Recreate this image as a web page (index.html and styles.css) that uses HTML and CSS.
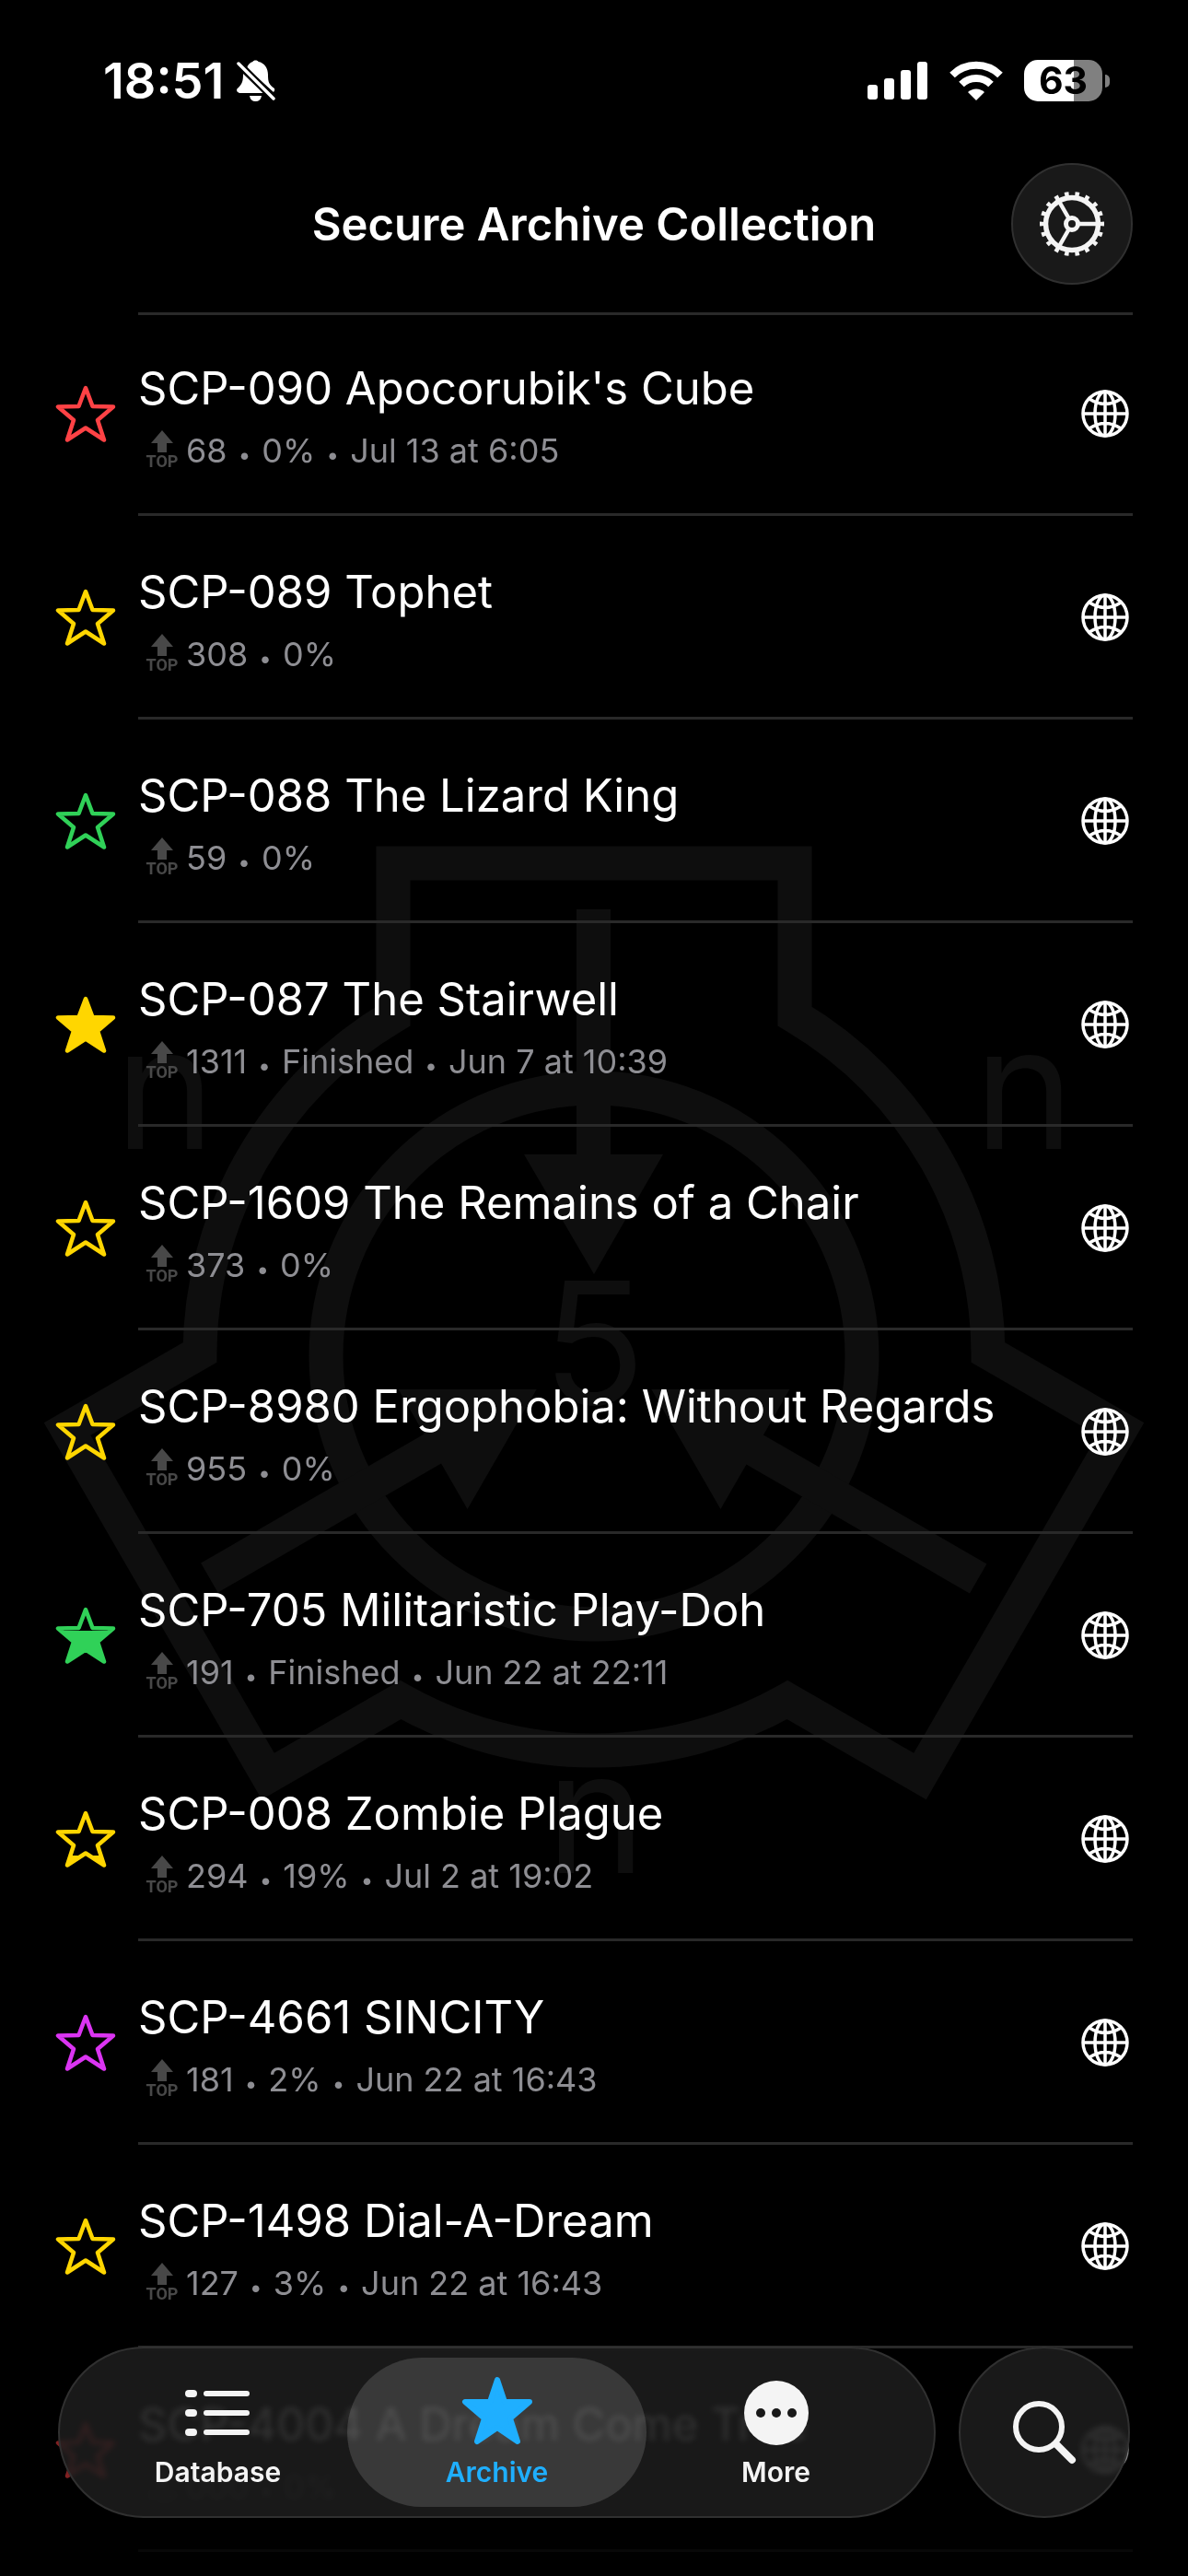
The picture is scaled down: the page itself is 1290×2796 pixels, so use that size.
FILE: index.html
```html
<!DOCTYPE html>
<html lang="en">
<head>
<meta charset="utf-8">
<meta name="viewport" content="width=device-width, initial-scale=1">
<title>Secure Archive Collection</title>
<link rel="stylesheet" href="styles.css">
</head>
<body>
<svg class="defs" width="0" height="0" aria-hidden="true">
  <symbol id="star" viewBox="0 0 66 62">
    <path d="M33 3 L40.5 23 L63 23.5 L46 38 L53 59.5 L33 46.5 L13 59.5 L20 38 L3 23.5 L25.5 23 Z" fill="none" stroke="currentColor" stroke-width="4.5" stroke-linejoin="round"/>
  </symbol>
  <clipPath id="star-shape">
    <path d="M33 3 L40.5 23 L63 23.5 L46 38 L53 59.5 L33 46.5 L13 59.5 L20 38 L3 23.5 L25.5 23 Z"/>
  </clipPath>
  <symbol id="globe" viewBox="-26 -26 52 52">
    <g fill="none" stroke="currentColor" stroke-width="3.5">
      <circle r="24"/>
      <ellipse rx="11" ry="24"/>
      <path d="M0 -24V24M-24 0H24M-17 -16Q0 -5 17 -16M-17 16Q0 5 17 16"/>
    </g>
  </symbol>
  <symbol id="arrow" viewBox="0 0 24 24">
    <path d="M12 0 L24 14 H17 V24 H7 V14 H0 Z" fill="currentColor"/>
  </symbol>
</svg>

<div class="backdrop" aria-hidden="true">
  <svg viewBox="-645 -645 1290 1290">
    <g fill="none" stroke="currentColor" stroke-width="37">
      <path d="M-218 -369 V-535 H218 V-369 A428 428 0 0 1 428 -4 L572 79 L354 456 L210 373 A428 428 0 0 1 -210 373 L-354 456 L-572 79 L-428 -4 A428 428 0 0 1 -218 -369 Z"/>
      <circle r="291"/>
    </g>
    <g fill="currentColor">
      <path d="M-19 -485H18V-219H75L0 -89L-76 -219H-19Z"/>
      <path transform="rotate(120)" d="M-18 -482H19V-202H75L0 -72L-75 -202H-18Z"/>
      <path transform="rotate(240)" d="M-18 -482H19V-202H75L0 -72L-75 -202H-18Z"/>
      <g class="marks" text-anchor="middle">
        <text x="0" y="52">5</text>
        <text x="-466" y="-225">n</text>
        <text x="467" y="-225">n</text>
        <text x="2" y="561">n</text>
      </g>
    </g>
  </svg>
</div>

<header>
  <div class="status">
    <div class="clock">
      <time>18:51</time>
      <svg width="42" height="46" viewBox="0 0 42 46" role="img" aria-label="Silent">
        <path fill="currentColor" d="M11 9 C12 5 15 2.500 17.500 2 C18 0 23 0 23.500 2 C30 3 34 9 34 16 C34 24 35 27 41 31 Q42 33 40 35 Z M7 15 L29 36 H3 Q0 35 0 33 Q0 31 2 30 C6 26 7 23 7 15 Z M14 39 H27 Q26 45 20.500 45 Q15 45 14 39 Z"/>
        <path stroke="#000" stroke-width="8" d="M4 6 L40 42"/>
        <path stroke="currentColor" stroke-width="3.500" stroke-linecap="round" d="M2 4 L40 42"/>
      </svg>
    </div>
    <div class="signals">
      <svg width="66" height="42" viewBox="0 0 66 42" fill="currentColor" role="img" aria-label="Signal">
        <rect y="25" width="11" height="16" rx="3"/><rect x="18" y="18" width="11" height="23" rx="3"/><rect x="36" y="9" width="11" height="32" rx="3"/><rect x="54" width="11" height="41" rx="3"/>
      </svg>
      <svg width="58" height="43" viewBox="0 0 58 43" role="img" aria-label="Wi-Fi">
        <g fill="none" stroke="currentColor" stroke-width="8">
          <path d="M3 15.500 A37 37 0 0 1 55 15.500"/>
          <path d="M13 25.500 A23 23 0 0 1 45 25.500"/>
        </g>
        <path fill="currentColor" d="M29 43 L20 34 A13 13 0 0 1 38 34 Z"/>
      </svg>
      <div class="battery"><span>63</span></div>
    </div>
  </div>
  <div class="titlebar">
    <h1>Secure Archive Collection</h1>
    <button class="glass round settings" aria-label="Settings">
      <svg width="72" height="72" viewBox="-36 -36 72 72" fill="none" stroke="currentColor">
        <circle r="28.500" stroke-width="5.500"/>
        <circle r="32.500" stroke-width="5" pathLength="180" stroke-dasharray="4 6" stroke-dashoffset="2"/>
        <circle r="6.500" stroke-width="5"/>
        <path stroke-width="4.500" d="M8 0H27M-4 -7L-13.500 -23.500M-4 7L-13.500 23.500"/>
      </svg>
    </button>
  </div>
</header>

<main>
<ul class="list">
  <li><svg class="star red"><use href="#star"/></svg><div class="body"><div class="text"><h2>SCP-090 Apocorubik's Cube</h2><p><span class="top"><svg><use href="#arrow"/></svg>TOP</span><span>68 <i>•</i> 0% <i>•</i> Jul 13 at 6:05</span></p></div><button aria-label="Open on the web"><svg class="globe"><use href="#globe"/></svg></button></div></li>
  <li><svg class="star yellow"><use href="#star"/></svg><div class="body"><div class="text"><h2>SCP-089 Tophet</h2><p><span class="top"><svg><use href="#arrow"/></svg>TOP</span><span>308 <i>•</i> 0%</span></p></div><button aria-label="Open on the web"><svg class="globe"><use href="#globe"/></svg></button></div></li>
  <li><svg class="star green"><use href="#star"/></svg><div class="body"><div class="text"><h2>SCP-088 The Lizard King</h2><p><span class="top"><svg><use href="#arrow"/></svg>TOP</span><span>59 <i>•</i> 0%</span></p></div><button aria-label="Open on the web"><svg class="globe"><use href="#globe"/></svg></button></div></li>
  <li><svg class="star yellow"><use href="#star"/><rect width="66" height="62" clip-path="url(#star-shape)"/></svg><div class="body"><div class="text"><h2>SCP-087 The Stairwell</h2><p><span class="top"><svg><use href="#arrow"/></svg>TOP</span><span>1311 <i>•</i> Finished <i>•</i> Jun 7 at 10:39</span></p></div><button aria-label="Open on the web"><svg class="globe"><use href="#globe"/></svg></button></div></li>
  <li><svg class="star yellow"><use href="#star"/></svg><div class="body"><div class="text"><h2>SCP-1609 The Remains of a Chair</h2><p><span class="top"><svg><use href="#arrow"/></svg>TOP</span><span>373 <i>•</i> 0%</span></p></div><button aria-label="Open on the web"><svg class="globe"><use href="#globe"/></svg></button></div></li>
  <li><svg class="star yellow"><use href="#star"/></svg><div class="body"><div class="text"><h2>SCP-8980 Ergophobia: Without Regards</h2><p><span class="top"><svg><use href="#arrow"/></svg>TOP</span><span>955 <i>•</i> 0%</span></p></div><button aria-label="Open on the web"><svg class="globe"><use href="#globe"/></svg></button></div></li>
  <li><svg class="star green"><use href="#star"/><g clip-path="url(#star-shape)"><rect y="26" width="66" height="36"/></g></svg><div class="body"><div class="text"><h2>SCP-705 Militaristic Play-Doh</h2><p><span class="top"><svg><use href="#arrow"/></svg>TOP</span><span>191 <i>•</i> Finished <i>•</i> Jun 22 at 22:11</span></p></div><button aria-label="Open on the web"><svg class="globe"><use href="#globe"/></svg></button></div></li>
  <li><svg class="star yellow"><use href="#star"/><g clip-path="url(#star-shape)"><rect y="49" width="66" height="13"/></g></svg><div class="body"><div class="text"><h2>SCP-008 Zombie Plague</h2><p><span class="top"><svg><use href="#arrow"/></svg>TOP</span><span>294 <i>•</i> 19% <i>•</i> Jul 2 at 19:02</span></p></div><button aria-label="Open on the web"><svg class="globe"><use href="#globe"/></svg></button></div></li>
  <li><svg class="star purple"><use href="#star"/></svg><div class="body"><div class="text"><h2>SCP-4661 SINCITY</h2><p><span class="top"><svg><use href="#arrow"/></svg>TOP</span><span>181 <i>•</i> 2% <i>•</i> Jun 22 at 16:43</span></p></div><button aria-label="Open on the web"><svg class="globe"><use href="#globe"/></svg></button></div></li>
  <li><svg class="star yellow"><use href="#star"/></svg><div class="body"><div class="text"><h2>SCP-1498 Dial-A-Dream</h2><p><span class="top"><svg><use href="#arrow"/></svg>TOP</span><span>127 <i>•</i> 3% <i>•</i> Jun 22 at 16:43</span></p></div><button aria-label="Open on the web"><svg class="globe"><use href="#globe"/></svg></button></div></li>
  <li class="faded"><svg class="star red"><use href="#star"/></svg><div class="body"><div class="text"><h2>SCP-4004 A Dream Come True</h2><p><span class="top"><svg><use href="#arrow"/></svg>TOP</span><span>000 <i>•</i> 0%</span></p></div><button aria-label="Open on the web"><svg class="globe"><use href="#globe"/></svg></button></div></li>
</ul>
</main>

<nav class="dock">
  <div class="tabs glass">
    <a href="#database">
      <svg width="72" height="78" viewBox="0 0 72 78" fill="currentColor">
        <rect x="0" y="17" width="13" height="8" rx="4"/><rect x="20" y="18" width="50" height="6" rx="3"/>
        <rect x="0" y="38" width="13" height="8" rx="4"/><rect x="20" y="39" width="50" height="6" rx="3"/>
        <rect x="0" y="59" width="13" height="8" rx="4"/><rect x="20" y="60" width="50" height="6" rx="3"/>
      </svg>
      <span>Database</span>
    </a>
    <a href="#archive" class="current" aria-current="page">
      <svg width="78" height="78" viewBox="0 0 78 78">
        <path fill="currentColor" stroke="currentColor" stroke-width="6" stroke-linejoin="round" d="M39 6 L47 30 H74 L53 48 L61 73 L39 58 L17 73 L25 48 L4 30 H31 Z"/>
      </svg>
      <span>Archive</span>
    </a>
    <a href="#more">
      <svg width="72" height="78" viewBox="0 0 72 78">
        <circle cx="36" cy="42" r="35" fill="currentColor"/>
        <g fill="#191919"><circle cx="19" cy="42" r="5"/><circle cx="36" cy="42" r="5"/><circle cx="53" cy="42" r="5"/></g>
      </svg>
      <span>More</span>
    </a>
  </div>
  <button class="glass round search" aria-label="Search">
    <svg width="70" height="70" viewBox="0 0 70 70" fill="none" stroke="currentColor" stroke-linecap="round">
      <circle cx="29" cy="29" r="25" stroke-width="6"/>
      <path d="M49 49 L65 65" stroke-width="8"/>
    </svg>
  </button>
</nav>
</body>
</html>
```
FILE: styles.css
```css
* { box-sizing: border-box; margin: 0; padding: 0; }

body {
  min-height: 100vh;
  background: #000;
  color: #fff;
  font-family: Inter, "Liberation Sans", sans-serif;
}

button { border: 0; background: none; color: inherit; font: inherit; }
a { color: inherit; text-decoration: none; }
svg { display: block; }
.defs { position: absolute; }

/* Emblem behind the list */
.backdrop {
  position: fixed;
  inset: 0;
  z-index: -1;
  display: flex;
  align-items: center;
  padding-top: 148px;
  color: #0e0e0e;
}
.backdrop svg { width: 100%; }
.marks { font-size: 184px; }

/* Status bar */
.status {
  display: flex;
  justify-content: space-between;
  align-items: center;
  height: 177px;
  padding: 0 85px 2px 112px;
}
.clock, .signals { display: flex; align-items: center; }
.clock { gap: 14px; font-size: 54px; font-weight: 600; }
.signals { gap: 23px; }
.battery {
  display: flex;
  align-items: center;
  gap: 3px;
}
.battery span {
  width: 85px;
  border-radius: 15px;
  background: linear-gradient(90deg, #fff 64%, #808080 64%);
  color: #000;
  font-size: 41px;
  font-weight: 700;
  line-height: 45px;
  text-align: center;
}
.battery::after {
  content: "";
  width: 5px;
  height: 14px;
  border-radius: 0 5px 5px 0;
  background: #808080;
}

/* Title bar */
.titlebar {
  display: grid;
  grid-template-columns: 132px 1fr 132px;
  align-items: center;
  padding: 0 60px 30px;
}
h1 {
  grid-column: 2;
  padding-top: 2px;
  font-size: 49px;
  font-weight: 600;
  line-height: 60px;
  text-align: center;
}

.glass {
  border: 2px solid #303030;
  background: rgba(31, 31, 31, .8);
  color: #f4f4f4;
  backdrop-filter: blur(3px);
}
.round {
  display: flex;
  align-items: center;
  justify-content: center;
  border-radius: 50%;
}
.settings { height: 132px; }

/* List */
.list { list-style: none; }
.list li {
  display: grid;
  grid-template-columns: 66px 1fr;
  gap: 24px;
  padding: 0 60px;
}
.star { width: 66px; height: 62px; margin-top: 79px; fill: currentColor; }
.red { color: #ff4245; }
.yellow { color: #ffd600; }
.green { color: #30d158; }
.purple { color: #db34f2; }

.body {
  display: flex;
  justify-content: space-between;
  align-items: flex-start;
  min-height: 221px;
  padding: 53px 4px 0 0;
  border-bottom: 3px solid #292929;
}
.body button { margin-top: 31px; }
.list li:first-child .body { border-top: 3px solid #292929; padding-top: 50px; }
h2 { font-size: 49px; font-weight: 400; line-height: 60px; }
.text p {
  display: flex;
  align-items: center;
  margin-top: 13px;
  color: #8e8e93;
  font-size: 36px;
  line-height: 48px;
}
.text i { margin: 0 2px; font-size: 24px; font-style: normal; line-height: 24px; }
.top {
  display: flex;
  flex-direction: column;
  align-items: center;
  width: 52px;
  color: #484848;
  font-family: "Liberation Sans Narrow", Roboto, sans-serif;
  font-size: 18px;
  font-weight: 700;
  line-height: 20px;
}
.top svg { width: 24px; height: 24px; }
.globe { width: 52px; height: 52px; }

.faded { opacity: .5; }
.faded .body { border-color: #101010; }
.faded p { opacity: .5; }

/* Bottom bar */
.dock {
  position: fixed;
  right: 63px;
  bottom: 63px;
  left: 63px;
  display: flex;
  gap: 25px;
}
.tabs {
  display: flex;
  flex: 1;
  padding: 0 20px;
  border-radius: 93px;
}
.tabs a {
  position: relative;
  display: flex;
  flex: 1;
  flex-direction: column;
  align-items: center;
  padding-top: 28px;
  font-size: 30px;
  font-weight: 600;
  line-height: 36px;
}
.tabs a > * { position: relative; }
.tabs span { margin-top: 10px; }
.tabs .current { color: #1fafff; }
.tabs .current::before {
  content: "";
  position: absolute;
  inset: 10px -11px;
  border-radius: 81px;
  background: rgba(255, 255, 255, .14);
}
.search { width: 186px; height: 186px; }
```
